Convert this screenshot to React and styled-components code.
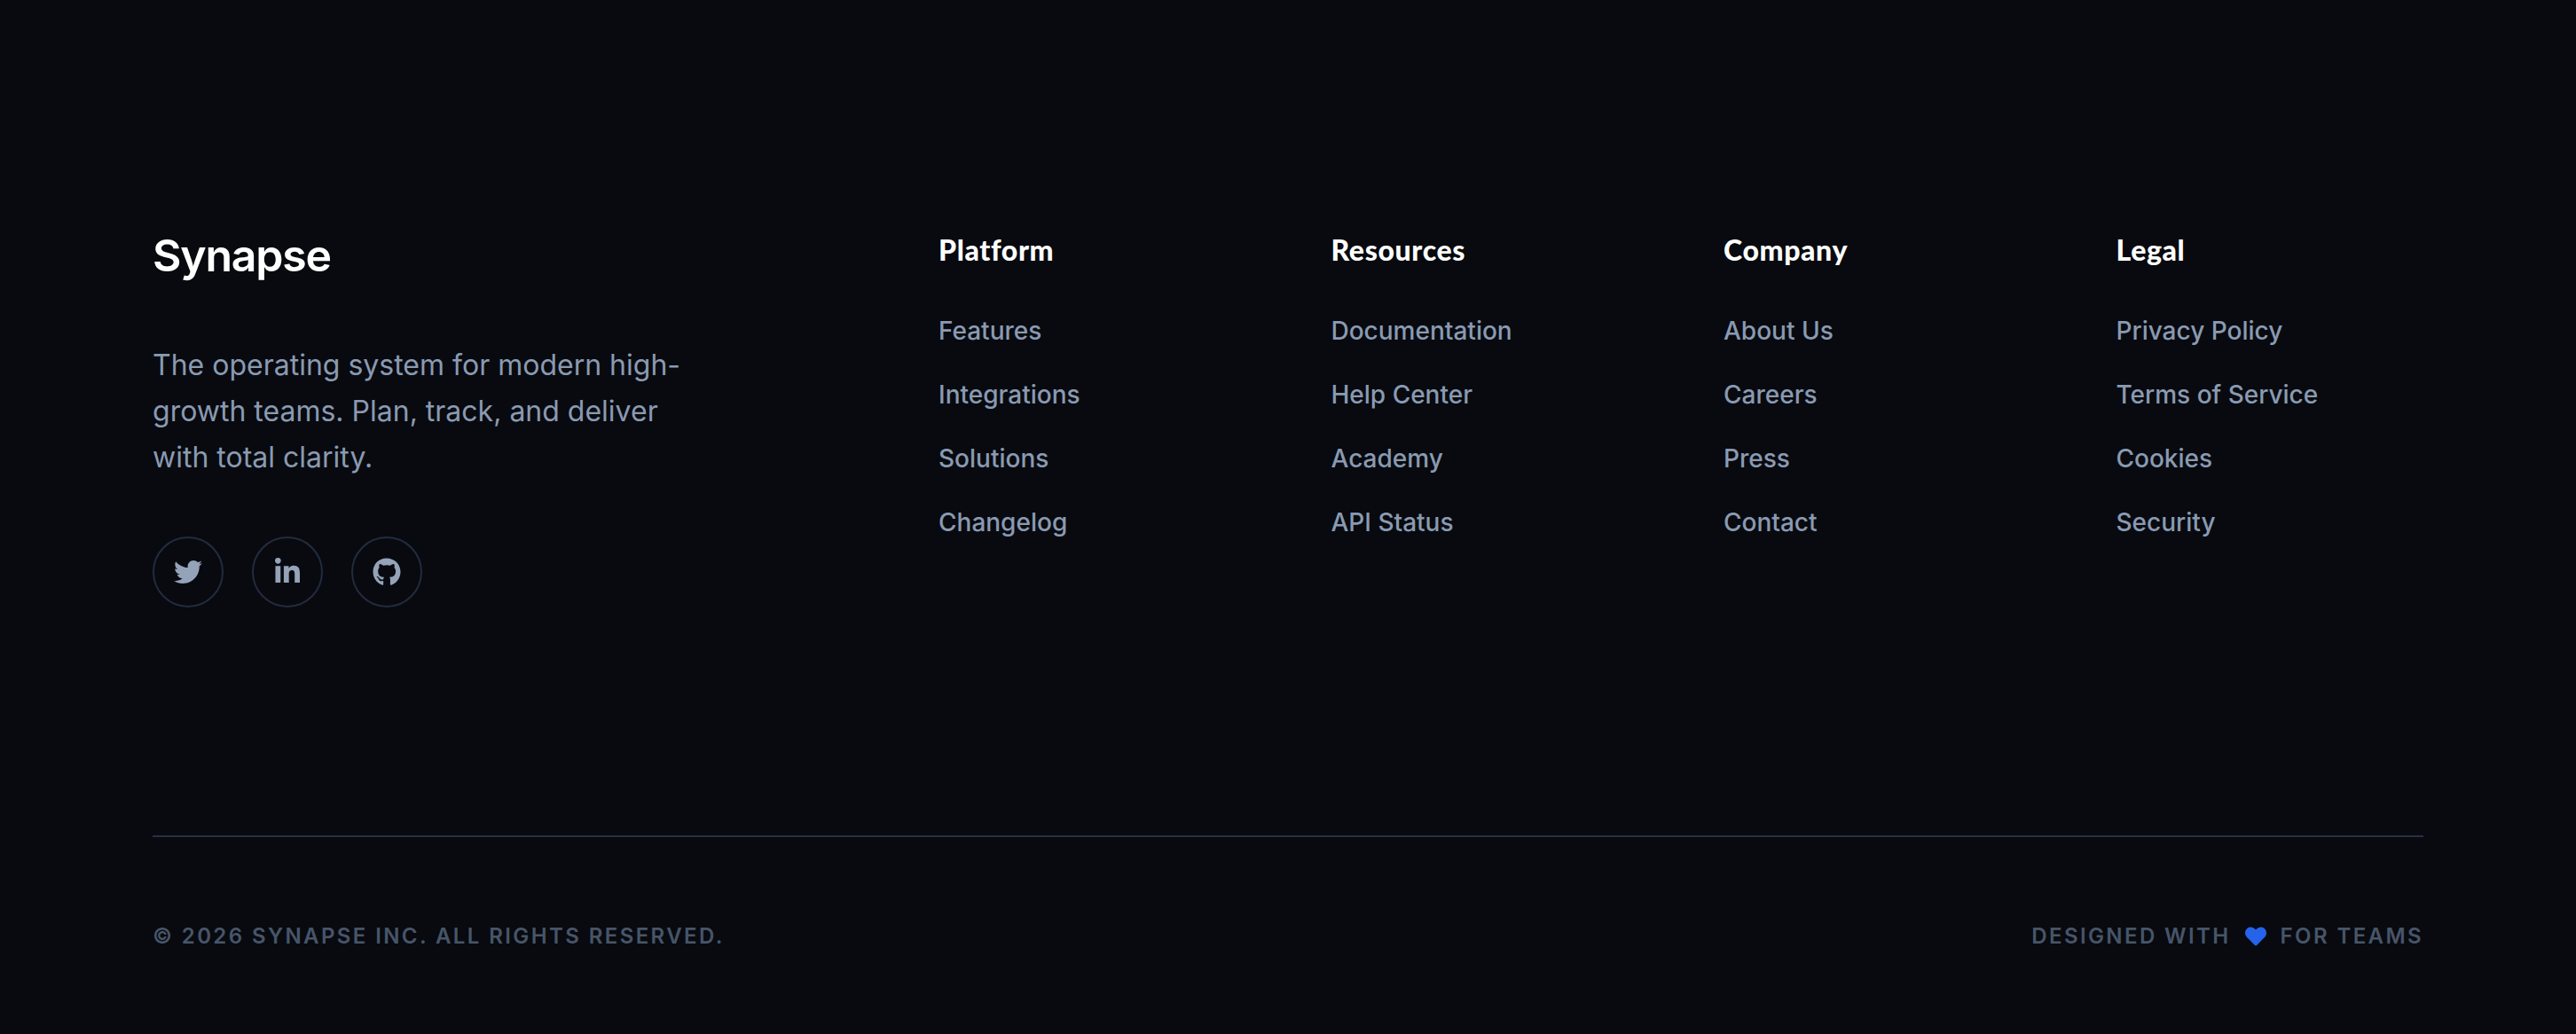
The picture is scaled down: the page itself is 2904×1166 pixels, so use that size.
import React from 'react';
import styled, { createGlobalStyle } from 'styled-components';
import { FaTwitter, FaLinkedinIn, FaGithub, FaHeart } from 'react-icons/fa';

const GlobalStyle = createGlobalStyle`
  html, body { margin: 0; padding: 0; background: #080a0f; }
  * { box-sizing: border-box; }
`;

const columns = [
  { title: 'Platform', links: ['Features', 'Integrations', 'Solutions', 'Changelog'] },
  { title: 'Resources', links: ['Documentation', 'Help Center', 'Academy', 'API Status'] },
  { title: 'Company', links: ['About Us', 'Careers', 'Press', 'Contact'] },
  { title: 'Legal', links: ['Privacy Policy', 'Terms of Service', 'Cookies', 'Security'] },
];

const App = () => {
  return (
    <Footer>
      <GlobalStyle />
      <TopGrid>
        <Brand>
          <Logo>Synapse</Logo>
          <Tagline>The operating system for modern high-growth teams. Plan, track, and deliver with total clarity.</Tagline>
          <Socials>
            <SocialLink href="#"><FaTwitter /></SocialLink>
            <SocialLink href="#"><FaLinkedinIn /></SocialLink>
            <SocialLink href="#"><FaGithub /></SocialLink>
          </Socials>
        </Brand>
        {columns.map((col) => (
          <Column key={col.title}>
            <ColumnTitle>{col.title}</ColumnTitle>
            <LinkList>
              {col.links.map((l) => (
                <li key={l}><FooterLink href="#">{l}</FooterLink></li>
              ))}
            </LinkList>
          </Column>
        ))}
      </TopGrid>
      <BottomBar>
        <Small>© 2026 Synapse Inc. All rights reserved.</Small>
        <Designed>
          <span>Designed with</span>
          <HeartIcon><FaHeart /></HeartIcon>
          <span>for teams</span>
        </Designed>
      </BottomBar>
    </Footer>
  );
};

export default App;

const Footer = styled.footer`
  width: 2904px;
  height: 1166px;
  padding: 256px 172px 0;
  background: #080a0f;
  font-family: Inter, "Liberation Sans", sans-serif;
`;
const TopGrid = styled.div`
  display: grid;
  grid-template-columns: 790px repeat(4, 1fr);
  column-gap: 96px;
  height: 686px;
`;
const Brand = styled.div`
  display: flex;
  flex-direction: column;
  align-items: flex-start;
`;
const Logo = styled.div`
  font-size: 50px;
  line-height: 60px;
  font-weight: 600;
  letter-spacing: -0.025em;
  color: #fff;
  margin-top: 2px;
`;
const Tagline = styled.p`
  margin: 68px 0 0;
  width: 640px;
  font-size: 32px;
  line-height: 52px;
  color: #8a9ab2;
`;
const Socials = styled.div`
  display: flex;
  gap: 32px;
  margin-top: 63px;
`;
const SocialLink = styled.a`
  width: 80px;
  height: 80px;
  border-radius: 50%;
  border: 2px solid #222c3f;
  display: flex;
  align-items: center;
  justify-content: center;
  color: #94a3b8;
  font-size: 32px;
`;
const Column = styled.div`
  display: flex;
  flex-direction: column;
`;
const ColumnTitle = styled.h4`
  margin: 2px 0 0;
  font-family: Lato, sans-serif;
  font-size: 32px;
  line-height: 48px;
  font-weight: 900;
  letter-spacing: 0.02em;
  color: #fff;
`;
const LinkList = styled.ul`
  list-style: none;
  margin: 49px 0 0;
  padding: 0;
  display: flex;
  flex-direction: column;
  gap: 36px;
`;
const FooterLink = styled.a`
  display: block;
  font-size: 28px;
  line-height: 36px;
  font-weight: 500;
  color: #8a9ab2;
  text-decoration: none;
`;
const BottomBar = styled.div`
  border-top: 2px solid #283044;
  padding-top: 96px;
  display: flex;
  justify-content: space-between;
  align-items: center;
`;
const Small = styled.div`
  font-size: 24px;
  line-height: 32px;
  font-weight: 600;
  letter-spacing: 0.1em;
  text-transform: uppercase;
  color: #475569;
`;
const Designed = styled(Small)`
  display: flex;
  align-items: center;
  gap: 16px;
`;
const HeartIcon = styled.span`
  display: inline-flex;
  color: #2563eb;
  font-size: 24px;
`;
